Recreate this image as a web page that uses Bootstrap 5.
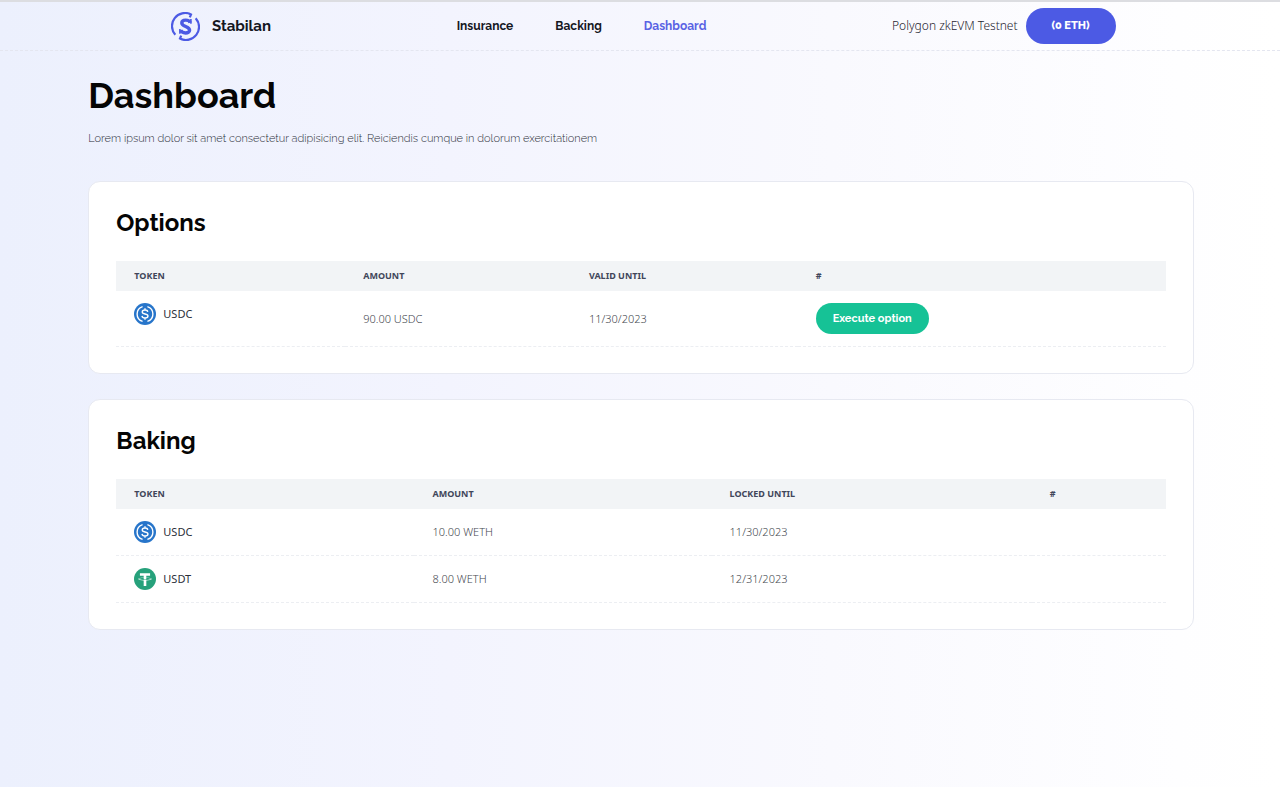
<!DOCTYPE html>
<html lang="en">
<head>
<meta charset="utf-8">
<meta name="viewport" content="width=device-width, initial-scale=1">
<title>Stabilan – Dashboard</title>
<link href="https://cdn.jsdelivr.net/npm/bootstrap@5.3.0/dist/css/bootstrap.min.css" rel="stylesheet">
<style>
:root { --brand: #4c5ae4; --line: #eceef2; --display: Raleway, Lato, sans-serif; }
body {
  min-height: 100vh;
  font: 11px/20px "Noto Sans", sans-serif;
  color: #1f2430;
  background: linear-gradient(90deg, #ecf0fd 0%, #f3f4fe 35%, #f9f9fe 65%, #fefeff 92%, #fff 100%);
}
.site-header { border-top: 2px solid #dcdde1; border-bottom: 1px dashed #e4e6f0; }
.header-inner { width: 73.8%; margin-left: 13.35%; min-height: 48px; }
.brand { gap: 12px; }
.brand-name { font: 700 15px/20px var(--display); color: #15171f; }
.main-nav { gap: 42px; }
.main-nav .nav-link { font: 700 12px/22px var(--display); color: #15171f; }
.main-nav .nav-link.active { color: #5a63e4; }
.network { font-size: 12px; font-weight: 300; }
.wallet-btn { --bs-btn-color: #fff; --bs-btn-bg: var(--brand); --bs-btn-hover-color: #fff; --bs-btn-hover-bg: #3d4bd2; font: 800 11px/20px var(--display); padding: 7px 25px; }
.page-main { width: 86.4%; margin-left: 6.9%; padding-top: 22px; }
.page-title { font: 700 36px/44px var(--display); color: #050505; margin-bottom: 12px; }
.page-intro { font: 300 11px/20px var(--display); color: #2c2f39; margin-bottom: 32px; }
.panel { border: 1px solid #e7e9f1; border-radius: 12px; padding: 26px 27px; margin-bottom: 25px; background: #fff; }
.panel-title { font: 700 24px/30px var(--display); color: #050505; margin-bottom: 23px; }
.token-table { table-layout: fixed; --bs-table-bg: transparent; margin: 0; }
.token-table th { font: 700 9px/14px "Noto Sans", sans-serif; color: #41465a; background: #f2f4f6; border: 0; padding: 8px 18px; text-transform: uppercase; }
.token-table td { font-weight: 300; color: #44474e; padding: 12px 18px; border-bottom: 1px dashed var(--line); line-height: 22px; vertical-align: middle; }
.token-table .token-cell { font-weight: 400; color: #2b2f3a; vertical-align: top; }
.token { gap: 7px; }
.execute-btn { --bs-btn-color: #fff; --bs-btn-bg: #16c296; --bs-btn-hover-color: #fff; --bs-btn-hover-bg: #12a982; font: 700 11px/21px var(--display); padding: 4px 16px; }
</style>
</head>
<body>
<svg class="d-none" aria-hidden="true">
  <symbol id="usdc" viewBox="0 0 32 32">
    <circle cx="16" cy="16" r="16" fill="#2775ca"/>
    <g fill="none" stroke="#fff" stroke-width="2">
      <path d="M12.5 5.2a11.3 11.3 0 0 0 0 21.6M19.5 5.2a11.3 11.3 0 0 1 0 21.6"/>
      <path d="M20 12.9c-.3-1.800-1.700-2.700-4-2.700-2.500 0-4 1.100-4 2.900 0 4.200 8.300 1.500 8.300 5.800 0 1.900-1.700 3-4.300 3-2.600 0-4.100-1.100-4.400-3.100M16 7.800v2.500M16 21.700v2.600"/>
    </g>
  </symbol>
  <symbol id="usdt" viewBox="0 0 32 32">
    <circle cx="16" cy="16" r="16" fill="#26a17b"/>
    <path fill="#fff" d="M17.900 17.400c-.1 0-.7.100-1.900.1-1 0-1.700 0-1.900-.1-3.900-.2-6.800-.9-6.800-1.700s2.900-1.500 6.800-1.700v2.700c.3 0 1 .1 1.900.1 1.100 0 1.700-.1 1.900-.1V14c3.900.2 6.800.9 6.800 1.700s-2.900 1.500-6.800 1.700m0-3.600v-2.400h5.500V7.700H8.600v3.700h5.500v2.400c-4.500.2-7.900 1.100-7.900 2.200s3.400 2 7.900 2.200V26h3.800v-7.800c4.500-.2 7.900-1.100 7.900-2.200s-3.400-2-7.900-2.200"/>
  </symbol>
</svg>

<header class="site-header">
  <div class="header-inner d-flex align-items-center justify-content-between">
    <a href="#" class="brand d-flex align-items-center text-decoration-none">
      <svg width="29" height="29" viewBox="0 0 29 29" fill="none" stroke="#4c5ae4" aria-hidden="true">
        <path stroke-width="2.200" d="M18.800 5.300L20 2.400A13.100 13.100 0 0 0 4.300 22.800M10.200 23.700L9 26.600A13.100 13.100 0 0 0 24.700 6.200"/>
        <path stroke-width="3.400" d="M19.200 10.700C18.200 7.300 10.800 7.200 10.800 10.900c0 4 7.800 3.200 7.800 7.300 0 3.700-7.600 3.600-9 0"/>
        <path stroke-width="1.600" d="M19.900 7v4.800M8.900 17v4.800"/>
      </svg>
      <span class="brand-name">Stabilan</span>
    </a>
    <nav class="main-nav nav" aria-label="Main">
      <a class="nav-link p-0" href="#">Insurance</a>
      <a class="nav-link p-0" href="#">Backing</a>
      <a class="nav-link p-0 active" href="#" aria-current="page">Dashboard</a>
    </nav>
    <div class="d-flex align-items-center gap-2">
      <span class="network">Polygon zkEVM Testnet</span>
      <button type="button" class="btn wallet-btn rounded-pill">(0 ETH)</button>
    </div>
  </div>
</header>

<main class="page-main">
  <h1 class="page-title">Dashboard</h1>
  <p class="page-intro">Lorem ipsum dolor sit amet consectetur adipisicing elit. Reiciendis cumque in dolorum exercitationem</p>

  <section class="panel">
    <h2 class="panel-title">Options</h2>
    <table class="table token-table">
      <colgroup><col style="width:21.8%"><col style="width:21.5%"><col style="width:21.600%"><col></colgroup>
      <thead><tr><th scope="col">Token</th><th scope="col">Amount</th><th scope="col">Valid until</th><th scope="col">#</th></tr></thead>
      <tbody>
        <tr>
          <td class="token-cell"><div class="token d-flex align-items-center"><svg width="22" height="22" aria-hidden="true"><use href="#usdc"/></svg>USDC</div></td>
          <td>90.00 USDC</td>
          <td>11/30/2023</td>
          <td><button type="button" class="btn execute-btn rounded-pill">Execute option</button></td>
        </tr>
      </tbody>
    </table>
  </section>

  <section class="panel">
    <h2 class="panel-title">Baking</h2>
    <table class="table token-table">
      <colgroup><col style="width:28.4%"><col style="width:28.3%"><col style="width:30.500%"><col></colgroup>
      <thead><tr><th scope="col">Token</th><th scope="col">Amount</th><th scope="col">Locked until</th><th scope="col">#</th></tr></thead>
      <tbody>
        <tr>
          <td class="token-cell"><div class="token d-flex align-items-center"><svg width="22" height="22" aria-hidden="true"><use href="#usdc"/></svg>USDC</div></td>
          <td>10.00 WETH</td><td>11/30/2023</td><td></td>
        </tr>
        <tr>
          <td class="token-cell"><div class="token d-flex align-items-center"><svg width="22" height="22" aria-hidden="true"><use href="#usdt"/></svg>USDT</div></td>
          <td>8.00 WETH</td><td>12/31/2023</td><td></td>
        </tr>
      </tbody>
    </table>
  </section>
</main>
<script src="https://cdn.jsdelivr.net/npm/bootstrap@5.3.0/dist/js/bootstrap.bundle.min.js"></script>
</body>
</html>
